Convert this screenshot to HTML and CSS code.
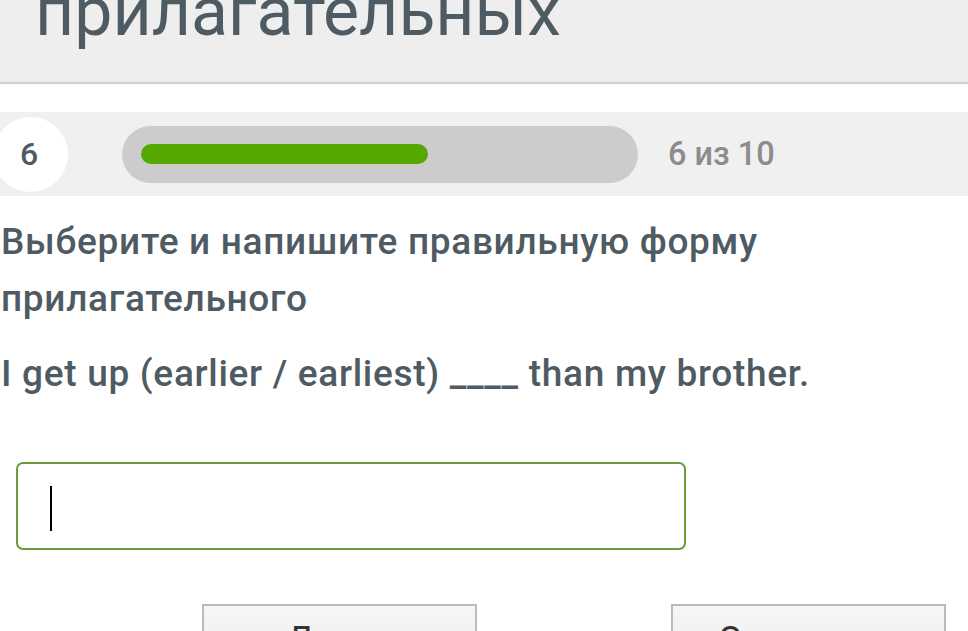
FILE: index.html
```html
<!DOCTYPE html>
<html lang="ru">
<head>
<meta charset="utf-8">
<title>Сравнительная степень прилагательных</title>
<link rel="stylesheet" href="styles.css">
</head>
<body>
<header class="topbar">
  <h1 class="topbar-title">прилагательных</h1>
</header>

<section class="progress-band">
  <div class="step-circle">6</div>
  <div class="track"><div class="track-fill" style="width: 287px"></div></div>
  <div class="progress-label">6 из 10</div>
</section>

<main class="task">
  <p class="task-instruction">Выберите и напишите правильную форму прилагательного</p>
  <p class="task-sentence">I get up (earlier / earliest) ____ than my brother.</p>

  <div class="answer-box"><span class="caret"></span></div>

  <div class="actions">
    <button class="btn btn-left">Далее</button>
    <button class="btn btn-right">Отправить</button>
  </div>
</main>
</body>
</html>
```

FILE: styles.css
```css
* { box-sizing: border-box; }

html, body {
  margin: 0;
  padding: 0;
  background: #ffffff;
  overflow: hidden;
}

body {
  width: 968px;
  height: 631px;
  font-family: Roboto, "Noto Sans", "Liberation Sans", sans-serif;
  color: #4f5b63;
}

.topbar {
  height: 84px;
  background: #eeeeee;
  border-bottom: 2px solid #cfcfcf;
  display: flex;
  align-items: flex-end;
  padding: 0 0 36px 35px;
  overflow: hidden;
}

.topbar-title {
  margin: 0;
  font-size: 68px;
  line-height: 68px;
  font-weight: 400;
  color: #4f5b63;
  white-space: nowrap;
}

.progress-band {
  margin-top: 28px;
  height: 84px;
  background: #f0f0f0;
  display: flex;
  align-items: center;
}

.step-circle {
  width: 75px;
  height: 75px;
  margin-left: -7px;
  border-radius: 50%;
  background: #ffffff;
  display: flex;
  align-items: center;
  justify-content: center;
  padding-right: 3px;
  font-size: 32px;
  font-weight: 500;
  color: #4f5b63;
  flex: none;
}

.track {
  margin-left: 54px;
  width: 516px;
  height: 57px;
  border-radius: 29px;
  background: #cccccc;
  display: flex;
  align-items: center;
  padding-left: 19px;
  flex: none;
}

.track-fill {
  height: 20px;
  border-radius: 10px;
  background: #55a800;
}

.progress-label {
  margin-left: 30px;
  font-size: 32.5px;
  font-weight: 500;
  color: #8c8c8c;
  white-space: nowrap;
}

.task {
  padding: 17px 0 0 1px;
}

.task-instruction,
.task-sentence {
  margin: 0;
  font-size: 37px;
  line-height: 57px;
  letter-spacing: 0.7px;
  font-weight: 500;
  color: #4f5b63;
}

.task-sentence {
  margin-top: 18px;
  white-space: nowrap;
}

.answer-box {
  margin: 60px 0 0 15px;
  width: 670px;
  height: 88px;
  border: 2px solid #6b9c3c;
  border-radius: 7px;
  background: #ffffff;
  display: flex;
  align-items: center;
  padding-left: 32px;
}

.caret {
  display: block;
  width: 2px;
  height: 45px;
  background: #000000;
  margin-top: 4px;
}

.actions {
  margin-top: 54px;
  display: flex;
  padding-left: 201px;
  gap: 194px;
}

.btn {
  width: 275px;
  height: 72px;
  border: 2px solid #bbbbbb;
  background: linear-gradient(#f6f6f6, #ececec);
  font-family: Roboto, "Noto Sans", "Liberation Sans", sans-serif;
  font-size: 36px;
  line-height: 36px;
  color: #333333;
  padding: 16px 0 0;
  display: flex;
  justify-content: center;
  align-items: flex-start;
}
```
